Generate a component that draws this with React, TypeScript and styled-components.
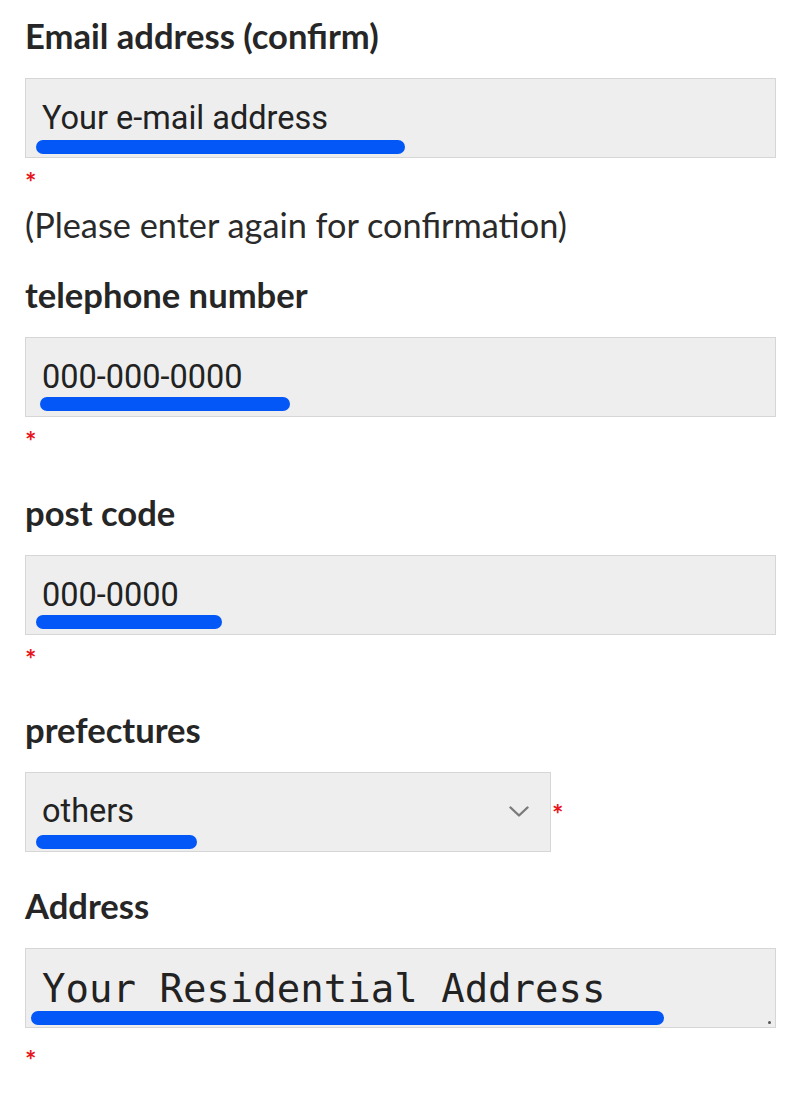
import React from "react";
import styled, { createGlobalStyle } from "styled-components";

const GlobalStyle = createGlobalStyle`
  html, body {
    margin: 0;
    padding: 0;
    background: #ffffff;
  }
  body {
    font-family: Lato, "Noto Sans", sans-serif;
    color: #222222;
  }
  * { box-sizing: border-box; }
`;

const Page = styled.div`
  padding: 16px 24px 40px 25px;
  width: 800px;
`;

const Field = styled.div<{ $after: number }>`
  display: flex;
  flex-direction: column;
  align-items: flex-start;
  margin-bottom: ${(p) => p.$after}px;
`;

const Label = styled.div`
  font-family: Lato, "Noto Sans", sans-serif;
  font-weight: 700;
  font-size: 34.6px;
  line-height: 40px;
  color: #262626;
  margin-bottom: 22px;
`;

const Box = styled.div<{ $width: number; $grip?: boolean }>`
  position: relative;
  width: ${(p) => p.$width}px;

  &::after {
    content: "";
    display: ${(p) => (p.$grip ? "block" : "none")};
    position: absolute;
    right: 5px;
    bottom: 4px;
    width: 3px;
    height: 3px;
    border-radius: 50%;
    background: #555555;
  }
`;

const TextInput = styled.input`
  display: block;
  width: 100%;
  height: 80px;
  margin: 0;
  padding: 0 16px 1px;
  border: 1px solid #d6d6d6;
  border-radius: 0;
  background: #eeeeee;
  font-family: Roboto, "Noto Sans", sans-serif;
  font-size: 32.5px;
  color: #222222;
  outline: none;
`;

const SelectRow = styled.div`
  display: flex;
  align-items: center;
  gap: 1px;
`;

const Select = styled.select`
  display: block;
  appearance: none;
  -webkit-appearance: none;
  width: 100%;
  height: 80px;
  margin: 0;
  padding: 0 16px 2px;
  border: 1px solid #d6d6d6;
  border-radius: 0;
  background: #eeeeee;
  font-family: Roboto, "Noto Sans", sans-serif;
  font-size: 32.5px;
  color: #222222;
  outline: none;
`;

const Chevron = styled.svg`
  position: absolute;
  right: 22px;
  top: 34px;
  width: 20px;
  height: 11px;
  pointer-events: none;
`;

const TextArea = styled.textarea`
  display: block;
  width: 100%;
  height: 80px;
  margin: 0;
  padding: 17px 16px 0;
  border: 1px solid #d6d6d6;
  border-radius: 0;
  background: #eeeeee;
  font-family: "DejaVu Sans Mono", "Liberation Mono", monospace;
  font-size: 39px;
  line-height: normal;
  color: #222222;
  overflow: hidden;
  resize: none;
  outline: none;
`;

const Highlight = styled.span<{ $left: number; $width: number; $top: number }>`
  position: absolute;
  left: ${(p) => p.$left}px;
  top: ${(p) => p.$top}px;
  width: ${(p) => p.$width}px;
  height: 14px;
  border-radius: 7px;
  background: #0457f7;
  pointer-events: none;
`;

const Required = styled.span<{ $top?: number }>`
  display: block;
  font-family: Lato, "Noto Sans", sans-serif;
  font-weight: 700;
  font-size: 27px;
  line-height: 22px;
  height: 22px;
  color: #e8141b;
  margin-top: ${(p) => p.$top ?? 13}px;
`;

const InlineRequired = styled.span`
  font-family: Lato, "Noto Sans", sans-serif;
  font-weight: 700;
  font-size: 27px;
  line-height: 22px;
  color: #e8141b;
  margin-top: 3px;
`;

const Note = styled.div`
  font-family: Lato, "Noto Sans", sans-serif;
  font-weight: 400;
  font-size: 34.3px;
  line-height: 40px;
  color: #2a2a2a;
  margin-top: 12px;
`;

export default function App() {
  return (
    <>
      <GlobalStyle />
      <Page>
        <Field $after={30}>
          <Label>Email address (confirm)</Label>
          <Box $width={751}>
            <TextInput readOnly value="Your e-mail address" />
            <Highlight $left={11} $width={369} $top={62} />
          </Box>
          <Required>*</Required>
          <Note>(Please enter again for confirmation)</Note>
        </Field>

        <Field $after={41}>
          <Label>telephone number</Label>
          <Box $width={751}>
            <TextInput readOnly value="000-000-0000" />
            <Highlight $left={15} $width={250} $top={60} />
          </Box>
          <Required>*</Required>
        </Field>

        <Field $after={40}>
          <Label>post code</Label>
          <Box $width={751}>
            <TextInput readOnly value="000-0000" />
            <Highlight $left={11} $width={186} $top={60} />
          </Box>
          <Required>*</Required>
        </Field>

        <Field $after={34}>
          <Label>prefectures</Label>
          <SelectRow>
            <Box $width={526}>
              <Select defaultValue="others">
                <option value="others">others</option>
              </Select>
              <Chevron viewBox="0 0 20 11" fill="none">
                <polyline
                  points="1.5,1.5 10,9.5 18.5,1.5"
                  stroke="#7a7a7a"
                  strokeWidth="2.4"
                  strokeLinecap="round"
                  strokeLinejoin="round"
                />
              </Chevron>
              <Highlight $left={11} $width={161} $top={63} />
            </Box>
            <InlineRequired>*</InlineRequired>
          </SelectRow>
        </Field>

        <Field $after={20}>
          <Label>Address</Label>
          <Box $width={751} $grip>
            <TextArea readOnly value="Your Residential Address" />
            <Highlight $left={6} $width={633} $top={63} />
          </Box>
          <Required $top={21}>*</Required>
        </Field>
      </Page>
    </>
  );
}
